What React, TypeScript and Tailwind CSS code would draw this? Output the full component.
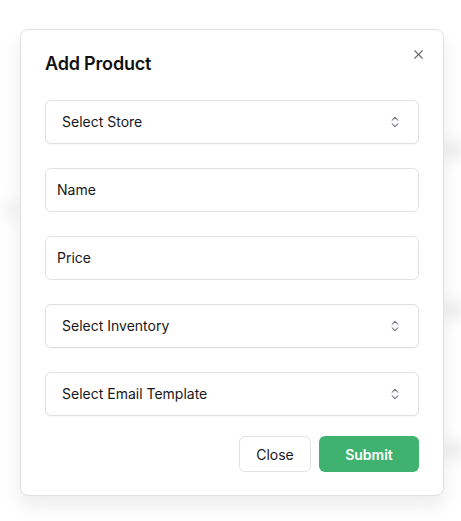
import React from "react";

function Chevrons() {
  return (
    <svg width="14" height="14" viewBox="0 0 24 24" fill="none" stroke="#6b7280" strokeWidth="1.8" strokeLinecap="round" strokeLinejoin="round">
      <path d="m7 15 5 5 5-5" />
      <path d="m7 9 5-5 5 5" />
    </svg>
  );
}

function SelectBox({ label }: { label: string }) {
  return (
    <div className="h-[44px] w-full rounded-[6px] border border-[#dde2e0] bg-white flex items-center justify-between pl-4 pr-[16px] text-[14px] text-[#18181b] shadow-[0_1px_2px_rgba(0,0,0,0.04)]">
      <span className="pb-[2px]">{label}</span>
      <Chevrons />
    </div>
  );
}

function InputBox({ label }: { label: string }) {
  return (
    <div className="h-[44px] w-full rounded-[6px] border border-[#dde2e0] bg-white flex items-center pl-[11px] pr-3 text-[14px] text-[#18181b]">
      <span className="pb-[2px]">{label}</span>
    </div>
  );
}

export default function App() {
  return (
    <div className="relative w-[461px] h-[521px] bg-white overflow-hidden" style={{ fontFamily: "Inter, 'Noto Sans', sans-serif" }}>
      <div className="absolute inset-0 pointer-events-none">
        <div className="absolute left-[440px] top-[140px] w-[30px] h-[20px] bg-[#f1f2f1] blur-[6px]" />
        <div className="absolute left-[440px] top-[300px] w-[30px] h-[20px] bg-[#f1f2f1] blur-[6px]" />
        <div className="absolute left-[440px] top-[440px] w-[30px] h-[20px] bg-[#f1f2f1] blur-[6px]" />
        <div className="absolute left-[0px] top-[200px] w-[20px] h-[20px] bg-[#f5f6f5] blur-[6px]" />
      </div>
      <div className="absolute left-[20px] top-[29px] w-[424px] h-[467px] rounded-[8px] border border-[#dfe3e1] bg-white shadow-[0_10px_20px_rgba(0,0,0,0.08)] px-6 pt-[22px] pb-6 flex flex-col">
        <button className="absolute right-[17px] top-[17px] text-[#6b6b6b]">
          <svg width="15" height="15" viewBox="0 0 24 24" fill="none" stroke="currentColor" strokeWidth="1.8" strokeLinecap="round">
            <path d="M18 6 6 18" />
            <path d="m6 6 12 12" />
          </svg>
        </button>
        <h2 className="text-[18px] leading-[24px] font-semibold text-[#111] tracking-[-0.01em]">Add Product</h2>
        <div className="mt-[24px] flex flex-col gap-6">
          <SelectBox label="Select Store" />
          <InputBox label="Name" />
          <InputBox label="Price" />
          <SelectBox label="Select Inventory" />
          <SelectBox label="Select Email Template" />
        </div>
        <div className="mt-[20px] flex justify-end gap-2">
          <button className="h-[36px] w-[72px] rounded-[6px] border border-[#dfe3e1] bg-white text-[14px] font-normal text-[#18181b]">Close</button>
          <button className="h-[36px] w-[100px] rounded-[6px] bg-[#3fb26f] text-[14px] font-semibold text-white">Submit</button>
        </div>
      </div>
    </div>
  );
}
